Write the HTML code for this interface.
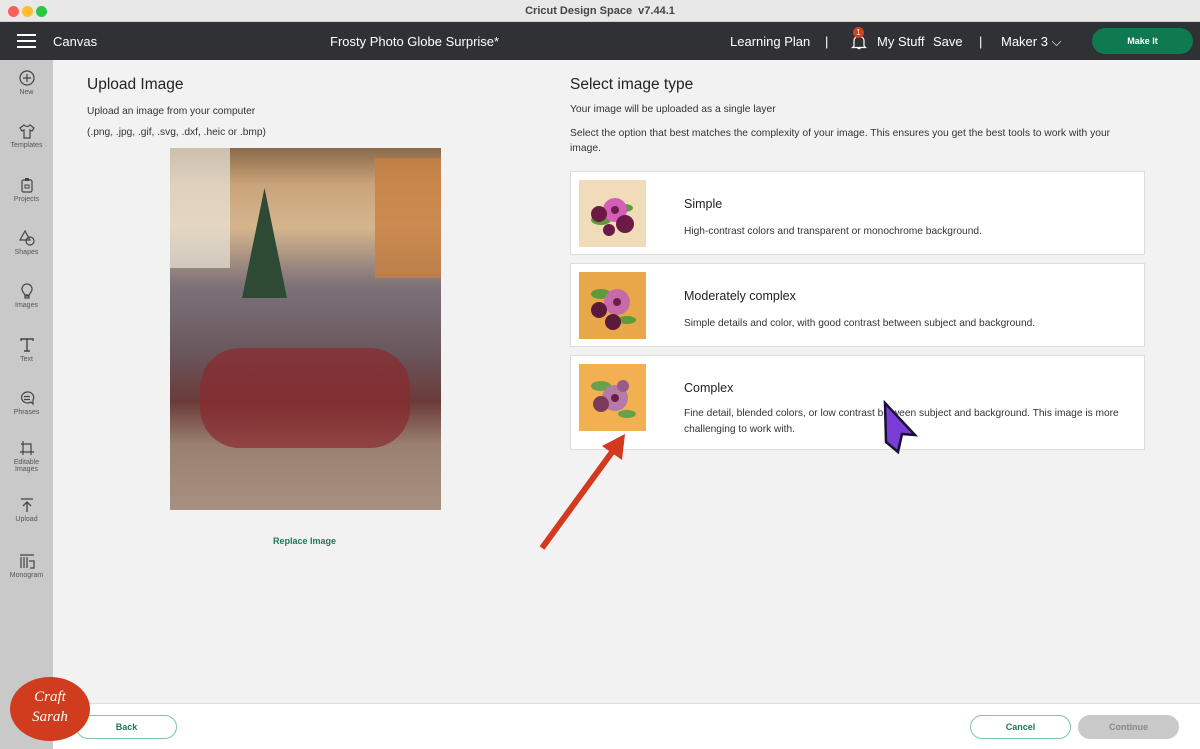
<!DOCTYPE html>
<html><head><meta charset="utf-8"><style>
*{margin:0;padding:0;box-sizing:border-box}
body{width:1200px;height:749px;overflow:hidden;font-family:"Liberation Sans",sans-serif;background:#f2f2f2;position:relative;color:#222}
.abs{position:absolute}
#tb{left:0;top:0;width:1200px;height:22px;background:#e9e8e8;border-bottom:1px solid #cfcfcf;text-align:center;font-size:11px;font-weight:bold;line-height:22px;color:#444}
.dot{position:absolute;top:6px;width:11px;height:11px;border-radius:50%}
#hd{left:0;top:22px;width:1200px;height:38px;background:#2f3134;color:#fff;font-size:13px}
#hd span{position:absolute;top:12px}
#sb{left:0;top:60px;width:53px;height:689px;background:#c9c9c9}
.si{position:absolute;left:0;width:53px;text-align:center;font-size:7px;color:#555}
.si svg{display:block;margin:0 auto 3px}
.card{position:absolute;left:570px;width:575px;background:#fff;border:1px solid #dcdcdc}
.card .th{position:absolute;left:8px;top:8px;width:67px;height:67px}
.card h4{position:absolute;left:113px;font-size:12.5px;font-weight:normal;color:#222}
.card p{position:absolute;left:113px;font-size:10.2px;color:#333;line-height:16px;width:450px}
.btn{position:absolute;height:24px;border-radius:12px;font-size:9px;font-weight:bold;text-align:center;line-height:22px}
</style></head><body>
<div id="tb" class="abs">Cricut Design Space&nbsp; v7.44.1
<div class="dot" style="left:8px;background:#fe5f57"></div><div class="dot" style="left:22px;background:#febc2e"></div><div class="dot" style="left:36px;background:#28c840"></div></div>
<div id="hd" class="abs">
<svg class="abs" style="left:17px;top:12px" width="19" height="14"><path d="M0 1H19M0 7H19M0 13H19" stroke="#fff" stroke-width="2"/></svg>
<span style="left:53px">Canvas</span>
<span style="left:330px">Frosty Photo Globe Surprise*</span>
<span style="left:730px">Learning Plan</span><span style="left:825px">|</span>
<svg class="abs" style="left:851px;top:11px" width="16" height="17"><path d="M3 13V8a5 5 0 0 1 10 0v5l1.5 1.5h-13zM6.5 15.5h3" stroke="#fff" fill="none" stroke-width="1.2"/></svg>
<div class="abs" style="left:853px;top:5px;width:11px;height:11px;border-radius:50%;background:#d4401e;font-size:8px;text-align:center;line-height:11px">1</div>
<span style="left:877px">My Stuff</span><span style="left:933px">Save</span><span style="left:979px">|</span>
<span style="left:1001px">Maker 3 ⌵</span>
<div class="abs" style="left:1092px;top:6px;width:101px;height:26px;border-radius:13px;background:#0f7a4f;font-size:9px;font-weight:bold;text-align:center;line-height:26px">Make It</div>
</div>
<div id="sb" class="abs">
<div class="si" style="top:10px"><svg width="16" height="16"><circle cx="8" cy="8" r="7" fill="none" stroke="#444" stroke-width="1.2"/><path d="M8 4v8M4 8h8" stroke="#444" stroke-width="1.2"/></svg>New</div>
<div class="si" style="top:63px"><svg width="16" height="16"><path d="M5 2L1 5l2 3 2-1v8h6V7l2 1 2-3-4-3q-3 3-6 0z" fill="none" stroke="#444" stroke-width="1.2"/></svg>Templates</div>
<div class="si" style="top:117px"><svg width="16" height="16"><rect x="3" y="3" width="10" height="12" rx="1.5" fill="none" stroke="#444" stroke-width="1.2"/><rect x="6" y="1" width="4" height="3" fill="#444"/><path d="M6 8h4v3H6z" fill="none" stroke="#444"/></svg>Projects</div>
<div class="si" style="top:170px"><svg width="16" height="16"><path d="M6 1L1 10h10z" fill="none" stroke="#444" stroke-width="1.2"/><circle cx="11" cy="11" r="4" fill="none" stroke="#444" stroke-width="1.2"/></svg>Shapes</div>
<div class="si" style="top:223px"><svg width="16" height="16"><path d="M8 1a5 5 0 0 0-4 8l2 3h4l2-3a5 5 0 0 0-4-8zM6 13h4v2H6z" fill="none" stroke="#444" stroke-width="1.2"/></svg>Images</div>
<div class="si" style="top:277px"><svg width="16" height="16"><path d="M2 4V2h12v2M8 2v12M5 14h6" fill="none" stroke="#444" stroke-width="1.4"/></svg>Text</div>
<div class="si" style="top:330px"><svg width="16" height="16"><path d="M8 2a6 5.5 0 1 0 4 10l2 2v-4A6 5.5 0 0 0 8 2zM5 6.5h6M5 9.5h6" fill="none" stroke="#444" stroke-width="1.2"/></svg>Phrases</div>
<div class="si" style="top:380px"><svg width="16" height="16"><path d="M4 1v14M1 12h14M12 15V4H2" fill="none" stroke="#444" stroke-width="1.2"/></svg>Editable<br>Images</div>
<div class="si" style="top:437px"><svg width="16" height="16"><path d="M2 2h12M8 15V5M4 9l4-4 4 4" fill="none" stroke="#444" stroke-width="1.3"/></svg>Upload</div>
<div class="si" style="top:493px"><svg width="16" height="16"><path d="M1 2h14M2 4v11M5 4v11M8 4v11M10 8h5v7h-4" fill="none" stroke="#444" stroke-width="1.2"/></svg>Monogram</div>
</div>
<div class="abs" style="left:87px;top:76px;font-size:15.5px">Upload Image</div>
<div class="abs" style="left:87px;top:106px;font-size:10.2px;color:#333">Upload an image from your computer</div>
<div class="abs" style="left:87px;top:127px;font-size:10.2px;color:#333">(.png, .jpg, .gif, .svg, .dxf, .heic or .bmp)</div>
<div class="abs" style="left:170px;top:148px;width:271px;height:362px;background:linear-gradient(180deg,#8a6a4a 0%,#c9a37a 10%,#d6b58c 22%,#7d7278 38%,#6a5a60 55%,#6b3a3a 70%,#9a8070 82%,#a89080 100%)">
<div class="abs" style="left:0;top:0;width:60px;height:120px;background:#e8e4da;opacity:.7"></div>
<div class="abs" style="left:205px;top:10px;width:66px;height:120px;background:#c88040;opacity:.8"></div>
<div class="abs" style="left:72px;top:40px;width:45px;height:110px;background:#2e4a34;clip-path:polygon(50% 0,100% 100%,0 100%)"></div>
<div class="abs" style="left:30px;top:200px;width:210px;height:100px;background:#8a2a2e;opacity:.7;border-radius:40px"></div>
</div>
<div class="abs" style="left:273px;top:536px;font-size:9px;font-weight:bold;color:#1b7a52">Replace Image</div>
<div class="abs" style="left:570px;top:76px;font-size:15.5px">Select image type</div>
<div class="abs" style="left:570px;top:104px;font-size:10.3px;color:#333">Your image will be uploaded as a single layer</div>
<div class="abs" style="left:570px;top:126px;font-size:10.3px;color:#333;line-height:15px;width:560px">Select the option that best matches the complexity of your image. This ensures you get the best tools to work with your image.</div>
<div class="card" style="top:171px;height:84px"><div class="th" style="background:#f0dcb8"><svg width="67" height="67"><ellipse cx="22" cy="40" rx="10" ry="5" fill="#5c9a3a"/><ellipse cx="45" cy="28" rx="9" ry="4" fill="#5c9a3a"/><circle cx="36" cy="30" r="12" fill="#d45fb6"/><circle cx="36" cy="30" r="4" fill="#6a1e4a"/><circle cx="20" cy="34" r="8" fill="#6b1a46"/><circle cx="46" cy="44" r="9" fill="#6b1a46"/><circle cx="30" cy="50" r="6" fill="#6b1a46"/></svg></div><h4 style="top:25px">Simple</h4><p style="top:52px">High-contrast colors and transparent or monochrome background.</p></div>
<div class="card" style="top:263px;height:84px"><div class="th" style="background:#e8a84a"><svg width="67" height="67"><ellipse cx="22" cy="22" rx="10" ry="5" fill="#5c9a3a"/><ellipse cx="48" cy="48" rx="9" ry="4" fill="#5c9a3a"/><circle cx="38" cy="30" r="13" fill="#c86aa8"/><circle cx="38" cy="30" r="4" fill="#6a1e4a"/><circle cx="20" cy="38" r="8" fill="#5a1a3a"/><circle cx="34" cy="50" r="8" fill="#5a1a3a"/></svg></div><h4 style="top:25px">Moderately complex</h4><p style="top:52px">Simple details and color, with good contrast between subject and background.</p></div>
<div class="card" style="top:355px;height:95px"><div class="th" style="background:#f2b050"><svg width="67" height="67"><ellipse cx="22" cy="22" rx="10" ry="5" fill="#6aa04a"/><ellipse cx="48" cy="50" rx="9" ry="4" fill="#6aa04a"/><circle cx="36" cy="34" r="13" fill="#b57aa8"/><circle cx="36" cy="34" r="4" fill="#6a1e4a"/><circle cx="22" cy="40" r="8" fill="#7a3a5a"/><circle cx="44" cy="22" r="6" fill="#9a5a88"/></svg></div><h4 style="top:25px">Complex</h4><p style="top:50px">Fine detail, blended colors, or low contrast between subject and background. This image is more challenging to work with.</p></div>
<svg class="abs" style="left:530px;top:420px" width="110" height="140"><path d="M12 128L85 28" stroke="#d2391e" stroke-width="6"/><path d="M95 14L72 26 92 40z" fill="#d2391e"/></svg>
<svg class="abs" style="left:880px;top:400px" width="40" height="56"><path d="M5 3L35 35 22 34 18 52 6 42z" fill="#7a3cd8" stroke="#1a1030" stroke-width="2.5"/></svg>
<div class="abs" style="left:53px;top:703px;width:1147px;height:46px;background:#fff;border-top:1px solid #ddd"></div>
<div class="btn" style="left:76px;top:715px;width:101px;border:1.5px solid #7cc4a8;color:#1b7a52">Back</div>
<div class="btn" style="left:970px;top:715px;width:101px;border:1.5px solid #7cc4a8;color:#1b7a52;background:#fff">Cancel</div>
<div class="btn" style="left:1078px;top:715px;width:101px;background:#c9c9c9;color:#888;line-height:24px">Continue</div>
<div class="abs" style="left:10px;top:677px;width:80px;height:64px;border-radius:50%;background:#cf3c1e;color:#fff;font-family:'Liberation Serif',serif;font-style:italic;font-size:15px;text-align:center;line-height:20px;padding-top:10px">Craft<br>Sarah</div>
</body></html>
